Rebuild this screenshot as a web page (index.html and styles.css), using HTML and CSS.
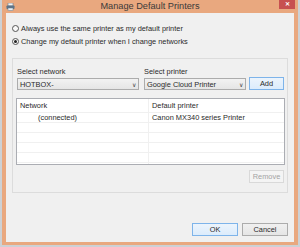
FILE: index.html
```html
<!DOCTYPE html>
<html lang="en">
<head>
    <meta charset="UTF-8">
    <title>Manage Default Printers</title>
    <link rel="stylesheet" href="styles.css">
</head>
<body>
    <div class="window">
        <div class="titlebar">
            <svg class="app-icon" width="9" height="8" viewBox="0 0 9 8">
                <rect x="2" y="0" width="5" height="3" fill="#f4f4f4" stroke="#6a7a88" stroke-width="0.6"/>
                <rect x="0.5" y="2.5" width="8" height="3.5" rx="0.8" fill="#5c7388"/>
                <rect x="2" y="5" width="5" height="2.6" fill="#e8eef3" stroke="#6a7a88" stroke-width="0.5"/>
            </svg>
            <div class="title">Manage Default Printers</div>
            <div class="close">&#x2715;</div>
        </div>

        <div class="client">
            <div class="radio-row">
                <span class="radio"></span>
                <span>Always use the same printer as my default printer</span>
            </div>
            <div class="radio-row">
                <span class="radio checked"></span>
                <span>Change my default printer when I change networks</span>
            </div>

            <div class="group">
                <div class="pick-row">
                    <div class="field network-field">
                        <label>Select network</label>
                        <div class="combo"><span>HOTBOX-</span><span class="arrow">&#x2228;</span></div>
                    </div>
                    <div class="field printer-field">
                        <label>Select printer</label>
                        <div class="combo"><span>Google Cloud Printer</span><span class="arrow">&#x2228;</span></div>
                    </div>
                    <button class="btn default add-btn">Add</button>
                </div>

                <div class="list">
                    <div class="list-head">
                        <div class="col-net">Network</div>
                        <div class="col-printer">Default printer</div>
                    </div>
                    <div class="list-row">
                        <div class="col-net"><span class="indent">(connected)</span></div>
                        <div class="col-printer">Canon MX340 series Printer</div>
                    </div>
                    <div class="list-row"><div class="col-net"></div><div class="col-printer"></div></div>
                    <div class="list-row"><div class="col-net"></div><div class="col-printer"></div></div>
                    <div class="list-row"><div class="col-net"></div><div class="col-printer"></div></div>
                    <div class="list-row"><div class="col-net"></div><div class="col-printer"></div></div>
                    <div class="list-row last"><div class="col-net"></div><div class="col-printer"></div></div>
                </div>

                <div class="remove-row">
                    <button class="btn disabled" disabled>Remove</button>
                </div>
            </div>

            <div class="footer">
                <button class="btn default">OK</button>
                <button class="btn">Cancel</button>
            </div>
        </div>
    </div>
</body>
</html>
```
FILE: styles.css
```css
body {
    margin: 0;
    background-color: #cdd1d5;
    font-family: "Liberation Sans", Arial, sans-serif;
    font-size: 7.4px;
    color: #2a2a2a;
}
.window {
    margin-left: 2px;
    width: 296px;
    height: 245px;
    background-color: #e9a87f;
    display: flex;
    flex-direction: column;
}
.titlebar {
    height: 13px;
    display: flex;
    align-items: flex-start;
}
.app-icon {
    margin: 3px 0 0 4px;
}
.title {
    flex: 1;
    text-align: center;
    font-size: 9.2px;
    line-height: 13px;
    color: #3a3a3a;
    padding-left: 6px;
}
.close {
    width: 16px;
    height: 9px;
    margin-right: 3px;
    background-color: #c75050;
    color: #fff;
    font-size: 6px;
    line-height: 9px;
    text-align: center;
    font-weight: bold;
}
.client {
    flex: 1;
    margin: 0 4px 3px;
    background-color: #f0f0f0;
    padding: 11px 6px 6px;
    display: flex;
    flex-direction: column;
}
.radio-row {
    display: flex;
    align-items: center;
    gap: 2px;
    height: 9px;
    margin-bottom: 4px;
}
.radio {
    width: 7px;
    height: 7px;
    border: 1px solid #555;
    border-radius: 50%;
    background-color: #f8f8f8;
    box-sizing: border-box;
    display: flex;
    align-items: center;
    justify-content: center;
}
.radio.checked::after {
    content: "";
    width: 3px;
    height: 3px;
    border-radius: 50%;
    background-color: #222;
}
.group {
    margin-top: 8px;
    border: 1px solid #dcdcdc;
    height: 135px;
    box-sizing: border-box;
    padding: 0 3px 0 4px;
}
.pick-row {
    display: flex;
    align-items: flex-end;
    margin-top: 8px;
}
.field label {
    display: block;
    height: 9px;
    line-height: 9px;
    margin-bottom: 2px;
}
.network-field {
    width: 122px;
    margin-right: 5px;
}
.printer-field {
    width: 102px;
    margin-right: 3px;
}
.combo {
    height: 12px;
    box-sizing: border-box;
    border: 1px solid #acacac;
    background: linear-gradient(#f2f2f2, #e5e5e5);
    display: flex;
    align-items: center;
    justify-content: space-between;
    padding: 0 2px;
}
.arrow {
    font-size: 6px;
    color: #444;
}
.btn {
    font-family: inherit;
    font-size: 7.4px;
    color: #2a2a2a;
    height: 13px;
    padding: 0;
    border: 1px solid #acacac;
    background: linear-gradient(#f0f0f0, #e5e5e5);
    box-sizing: border-box;
}
.btn.default {
    border-color: #7eb4ea;
    background: linear-gradient(#ecf4fc, #dcecfc);
}
.btn.disabled {
    border-color: #d9d9d9;
    background: #f4f4f4;
    color: #a3a3a3;
}
.add-btn {
    width: 35px;
}
.list {
    margin: 8px 0 0 -1px;
    width: 269px;
    height: 67px;
    box-sizing: border-box;
    border: 1px solid #abadb3;
    background-color: #fff;
    overflow: hidden;
}
.list-head, .list-row {
    display: flex;
}
.list-head {
    height: 13px;
    line-height: 13px;
    border-bottom: 1px solid #f0f0f0;
}
.list-row {
    height: 9px;
    line-height: 9px;
    border-bottom: 1px solid #f0f0f0;
}
.list-row.last {
    border-bottom: none;
}
.col-net {
    width: 128px;
    padding-left: 3px;
    border-right: 1px solid #f0f0f0;
}
.col-printer {
    flex: 1;
    padding-left: 3px;
}
.indent {
    padding-left: 18px;
}
.remove-row {
    display: flex;
    justify-content: flex-end;
    margin-top: 5px;
}
.remove-row .btn {
    width: 35px;
}
.footer {
    margin-top: auto;
    display: flex;
    justify-content: flex-end;
    gap: 4px;
}
.footer .btn {
    width: 46px;
}
```
